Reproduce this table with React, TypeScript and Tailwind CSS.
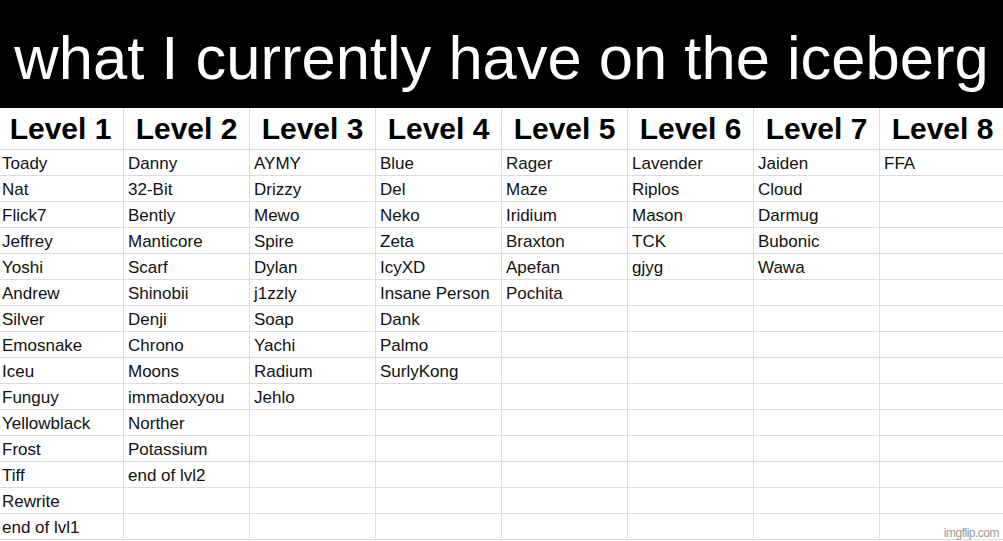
import React from "react";

const cols: string[][] = [
  ["Toady","Nat","Flick7","Jeffrey","Yoshi","Andrew","Silver","Emosnake","Iceu","Funguy","Yellowblack","Frost","Tiff","Rewrite","end of lvl1"],
  ["Danny","32-Bit","Bently","Manticore","Scarf","Shinobii","Denji","Chrono","Moons","immadoxyou","Norther","Potassium","end of lvl2"],
  ["AYMY","Drizzy","Mewo","Spire","Dylan","j1zzly","Soap","Yachi","Radium","Jehlo"],
  ["Blue","Del","Neko","Zeta","IcyXD","Insane Person","Dank","Palmo","SurlyKong"],
  ["Rager","Maze","Iridium","Braxton","Apefan","Pochita"],
  ["Lavender","Riplos","Mason","TCK","gjyg"],
  ["Jaiden","Cloud","Darmug","Bubonic","Wawa"],
  ["FFA"],
];

export default function App() {
  const rows = Array.from({ length: 15 }, (_, i) => i);
  return (
    <div className="w-[1003px] h-[541px] overflow-hidden bg-white relative" style={{ fontFamily: '"Liberation Sans", Arial, sans-serif' }}>
      <div className="h-[108px] bg-black flex items-start justify-center pt-[27px]">
        <div className="text-white text-[61.5px] leading-none whitespace-nowrap">what I currently have on the iceberg</div>
      </div>
      <div className="ml-[-2px] w-[1010px]">
        <div className="flex h-[42px] border-b border-[#dcdcdc]">
          {cols.map((_, c) => (
            <div key={c} className="w-[126px] shrink-0 border-r border-[#dcdcdc] flex items-center justify-center text-[30px] font-bold text-black leading-none pt-[1px] whitespace-nowrap">
              Level {c + 1}
            </div>
          ))}
        </div>
        {rows.map((r) => (
          <div key={r} className="flex h-[26px] border-b border-[#dcdcdc]">
            {cols.map((col, c) => (
              <div key={c} className="w-[126px] shrink-0 border-r border-[#dcdcdc] flex items-center pl-[4px] text-[17px] text-[#111] leading-none pt-[1px] whitespace-nowrap">
                {col[r] ?? ""}
              </div>
            ))}
          </div>
        ))}
      </div>
      <div className="absolute right-[4px] bottom-[2px] text-[12px] text-[#9a9a9a] tracking-[-0.5px] leading-none">imgflip.com</div>
    </div>
  );
}
